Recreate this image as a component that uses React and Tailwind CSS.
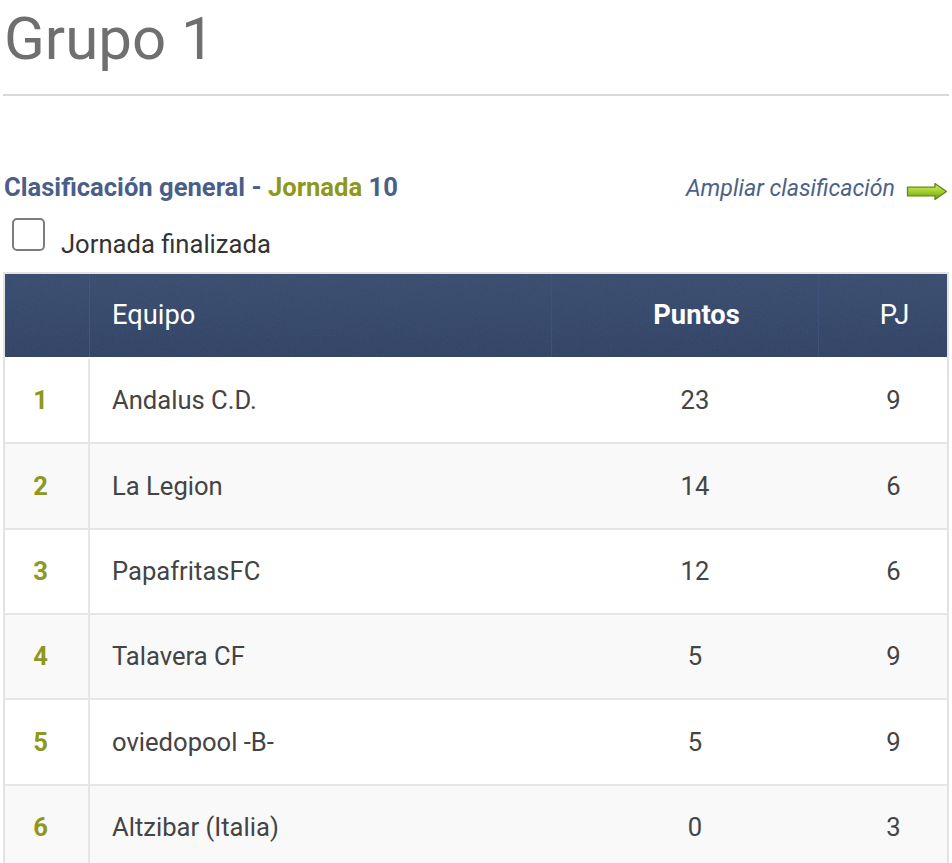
import React from "react";

const rows = [
  { pos: 1, team: "Andalus C.D.", pts: 23, pj: 9 },
  { pos: 2, team: "La Legion", pts: 14, pj: 6 },
  { pos: 3, team: "PapafritasFC", pts: 12, pj: 6 },
  { pos: 4, team: "Talavera CF", pts: 5, pj: 9 },
  { pos: 5, team: "oviedopool -B-", pts: 5, pj: 9 },
  { pos: 6, team: "Altzibar (Italia)", pts: 0, pj: 3 },
];

function Arrow() {
  return (
    <svg width="42" height="19" viewBox="0 0 42 19" className="block">
      <defs>
        <linearGradient id="ag" x1="0" y1="0" x2="0" y2="1">
          <stop offset="0" stopColor="#d8f070" />
          <stop offset="0.5" stopColor="#a2cf2e" />
          <stop offset="1" stopColor="#6c9a14" />
        </linearGradient>
      </defs>
      <path
        d="M1.5 5.2 H29 V1.5 L40.5 9.5 L29 17.5 V13.8 H1.5 Z"
        fill="url(#ag)"
        stroke="#5f8a12"
        strokeWidth="1.3"
        strokeLinejoin="round"
      />
    </svg>
  );
}

function Noise() {
  return (
    <svg className="absolute inset-0 w-full h-full pointer-events-none" preserveAspectRatio="none">
      <filter id="nz">
        <feTurbulence type="fractalNoise" baseFrequency="0.9" numOctaves="2" stitchTiles="stitch" />
        <feColorMatrix type="saturate" values="0" />
      </filter>
      <rect width="100%" height="100%" filter="url(#nz)" opacity="0.08" />
    </svg>
  );
}

export default function App() {
  return (
    <div className="w-full min-h-[863px] bg-white font-['Roboto',_'Liberation_Sans',_sans-serif] overflow-hidden">
      <div className="pl-[4px] pt-[4px] text-[60px] leading-[70px] text-[#6f6f6f]">Grupo 1</div>
      <div className="mt-[20px] mx-[3px] h-[2px] bg-[#d8d8d8]" />

      <div className="mt-[76px] flex items-baseline justify-between pl-[4px] pr-[4px]">
        <div className="text-[25.6px] leading-[30px] font-bold text-[#4a5f88]">
          Clasificación general - <span className="text-[#8d991b]">Jornada</span> 10
        </div>
        <div className="flex items-center gap-[11px]">
          <span className="text-[23.2px] leading-[28px] italic text-[#4d6189]">Ampliar clasificación</span>
          <span className="translate-y-[3px]">
            <Arrow />
          </span>
        </div>
      </div>

      <div className="mt-[16px] flex items-start">
        <div className="ml-[12px] w-[33px] h-[33px] rounded-[5px] border-2 border-[#7c7c7c] bg-white" />
        <div className="ml-[16px] mt-[11px] text-[25.6px] leading-[30px] text-[#333333]">Jornada finalizada</div>
      </div>

      <div className="mt-[13px] mx-[3px] border-2 border-[#e3e3e3]">
        <div className="relative flex h-[83px] bg-gradient-to-b from-[#384b6f] via-[#34476a] to-[#2f4164] text-white text-[27.3px]">
          <Noise />
          <div className="relative w-[85px] border-r border-[#45567a]" />
          <div className="relative w-[462px] flex items-center pl-[22px] border-r border-[#40527a]">Equipo</div>
          <div className="relative w-[267px] flex items-center justify-center pl-[23px] font-bold border-r border-[#40527a]">
            Puntos
          </div>
          <div className="relative flex-1 flex items-center justify-center pl-[23px]">PJ</div>
        </div>

        {rows.map((r, i) => (
          <div
            key={r.pos}
            className={
              "flex h-[85.33px] border-t-2 text-[25.6px] text-[#444444] " +
              (i === 0 ? "border-white bg-white" : i % 2 === 1 ? "border-[#e6e6e6] bg-[#f9f9f9]" : "border-[#e6e6e6] bg-white")
            }
          >
            <div className="w-[85px] border-r-2 border-[#e6e6e6] flex items-center justify-center pr-[12px] font-bold text-[#8d991b]">
              {r.pos}
            </div>
            <div className="w-[460px] flex items-center pl-[22px]">{r.team}</div>
            <div className="w-[290px] flex items-center justify-center">{r.pts}</div>
            <div className="flex-1 flex items-center justify-center">{r.pj}</div>
          </div>
        ))}
      </div>
    </div>
  );
}
